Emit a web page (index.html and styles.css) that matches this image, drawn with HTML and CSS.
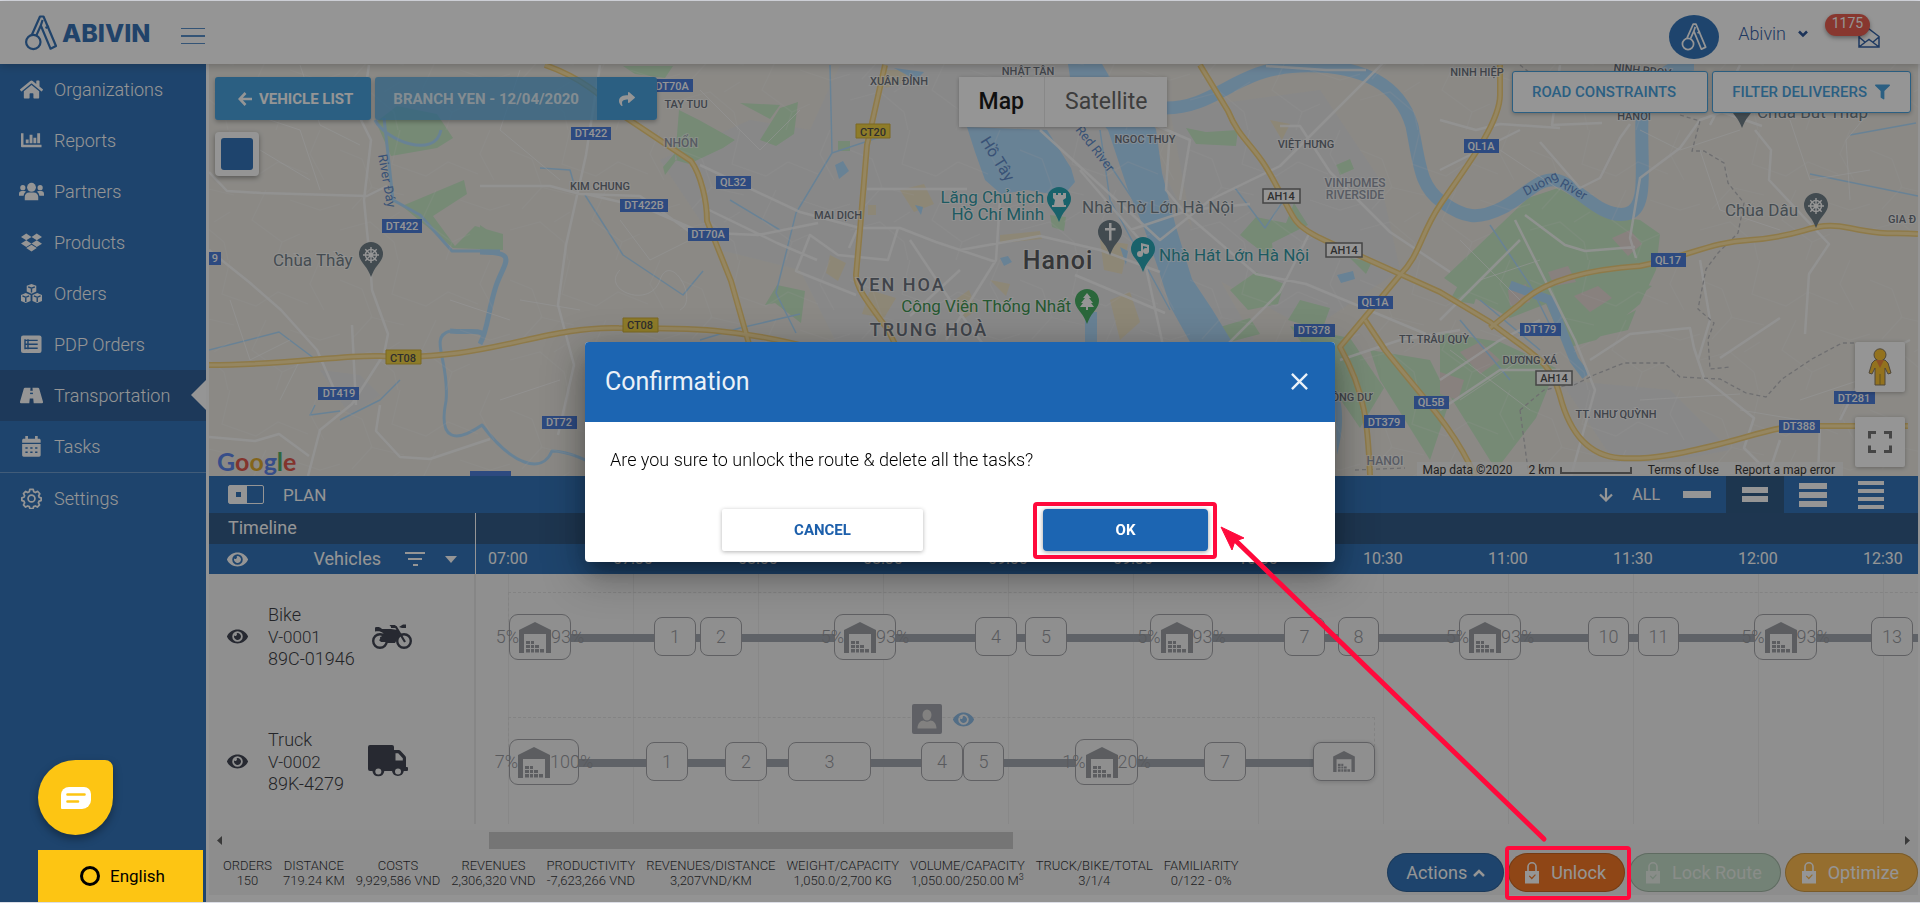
FILE: index.html
```html
<!DOCTYPE html>
<html lang="en">
<head>
<meta charset="utf-8">
<title>Abivin - Transportation</title>
<link rel="stylesheet" href="styles.css">
</head>
<body>
<svg class="sprite" aria-hidden="true">
  <symbol id="i-home" viewBox="0 0 576 512"><path d="M280.37 148.26L96 300.11V464a16 16 0 0 0 16 16l112.06-.29a16 16 0 0 0 15.92-16V368a16 16 0 0 1 16-16h64a16 16 0 0 1 16 16v95.64a16 16 0 0 0 16 16.05L464 480a16 16 0 0 0 16-16V300L295.67 148.26a12.19 12.19 0 0 0-15.3 0zM571.6 251.47L488 182.56V44.05a12 12 0 0 0-12-12h-56a12 12 0 0 0-12 12v72.61L318.47 43a48 48 0 0 0-61 0L4.34 251.47a12 12 0 0 0-1.6 16.9l25.5 31A12 12 0 0 0 45.15 301l235.22-193.74a12.19 12.19 0 0 1 15.3 0L530.9 301a12 12 0 0 0 16.9-1.6l25.5-31a12 12 0 0 0-1.7-16.93z"/></symbol>
  <symbol id="i-chart" viewBox="0 0 22 18"><path d="M0 1.5h2.6v12H21.5V16H1a1 1 0 0 1-1-1zM5 8h3v4H5zM9 3h3v9H9zM13 6h3v6h-3zM17 1.5h3V12h-3z"/></symbol>
  <symbol id="i-users" viewBox="0 0 26 20"><circle cx="13" cy="5.6" r="4.6"/><circle cx="4" cy="6" r="2.7"/><circle cx="22" cy="6" r="2.7"/><path d="M6 19v-3.200c0-3 2-4.800 4.500-4.800h5c2.500 0 4.500 1.800 4.500 4.800V19zM0 14.500v-2C0 10.600 1.200 9.600 3 9.600h2.400c.8 0 1.400.2 1.900.6C5.700 11.300 4.900 12.800 4.800 14.500zM26 14.500v-2c0-1.900-1.200-2.900-3-2.900h-2.400c-.8 0-1.400.2-1.900.6 1.600 1.100 2.400 2.600 2.500 4.300z"/></symbol>
  <symbol id="i-dropbox" viewBox="0 0 528 512"><path d="M264.4 116.3l-132 84.3 132 84.3-132 84.3L0 284.1l132.3-84.3L0 116.3 132.3 32l132.1 84.3zM131.6 395.7l132-84.3 132 84.3-132 84.3-132-84.3zm132.8-111.600l132-84.300-132-83.600L395.7 32 528 116.300l-132.300 84.300L528 284.800l-132.300 84.300-131.300-85z"/></symbol>
  <symbol id="i-cubes" viewBox="0 0 22 20"><path d="M11 0l5 2v6l-5 2.200L6 8V2zM5 9.500l5 2v6.300L5 20l-5-2.200v-6.300zM17 9.500l5 2v6.300L17 20l-5-2.200v-6.300z"/><path class="cut" d="M7.500 3l3.500 1.400L14.500 3M11 4.500V9M1.500 12.500L5 14l3.500-1.500M5 14v4.800M13.500 12.500L17 14l3.500-1.500M17 14v4.800"/></symbol>
  <symbol id="i-list" viewBox="0 0 22 19"><rect width="21.500" height="18.500" rx="2.200"/><path class="cut" d="M4.500 5.200h2M8 5.200h9.500M4.500 9.300h2M8 9.300h9.500M4.500 13.400h2M8 13.400h9.500M4.200 4v10.600M7.300 4v10.600"/></symbol>
  <symbol id="i-road" viewBox="0 0 24 16"><path d="M5.200 0H11l-.3 3h2.600L13 0h5.800c.6 0 1 .3 1.200.8L24 14.500c.2.800-.2 1.500-1 1.500h-8.700l-.5-5h-3.600l-.5 5H1c-.8 0-1.200-.7-1-1.500L4 .8C4.200.3 4.600 0 5.200 0z"/><path class="cut" d="M10.500 5.800h3"/></symbol>
  <symbol id="i-cal" viewBox="0 0 20 22"><path d="M3.500 0h2.800v3h7.400V0h2.800v3H18c1 0 1.600.7 1.600 1.600V7H.2V4.600C.2 3.700.8 3 1.800 3h1.700zM.2 8.300h19.400V20c0 1-.7 1.700-1.600 1.700H1.800C.9 21.700.2 21 .2 20z"/><path class="cut" stroke-width="2.400" d="M3.600 12.500h2.400M8.700 12.500h2.400M13.800 12.500h2.400M3.600 17h2.400M8.700 17h2.400M13.800 17h2.400"/></symbol>
  <symbol id="i-gear" viewBox="0 0 22 22"><path fill="none" stroke="currentColor" stroke-width="1.800" stroke-linejoin="round" d="M9.200 1.500h3.600l.6 2.500 1.700.8 2.300-1.300 2.300 2.500-1.200 2.100.6 1.700 2 .5v2.900l-2.200.6-.7 1.800 1.200 2.100-2.300 2.300-2.100-1.200-1.800.7-.6 2.200H9.400l-.7-2.200-1.700-.7L4.800 20l-2.200-2.300 1.200-2.100-.7-1.800-2.200-.6v-3l2.200-.5.7-1.700L2.600 5.900l2.300-2.300 2.100 1.200L8.700 4z"/><circle cx="11" cy="11" r="3.600" fill="none" stroke="currentColor" stroke-width="1.800"/></symbol>
  <symbol id="i-eye" viewBox="0 0 576 512"><path d="M572.52 241.4C518.29 135.59 410.93 64 288 64S57.68 135.64 3.48 241.41a32.35 32.35 0 0 0 0 29.19C57.71 376.41 165.07 448 288 448s230.32-71.64 284.52-177.41a32.35 32.35 0 0 0 0-29.19zM288 400a144 144 0 1 1 144-144 143.93 143.93 0 0 1-144 144zm0-240a95.31 95.31 0 0 0-25.31 3.79 47.85 47.85 0 0 1-66.9 66.9A95.78 95.78 0 1 0 288 160z"/></symbol>
  <symbol id="i-filter" viewBox="0 0 512 512"><path d="M487.976 0H24.028C2.710 0-8.047 25.866 7.058 40.971L192 225.941V432c0 7.831 3.821 15.170 10.237 19.662l80 55.980C298.020 518.690 320 507.493 320 487.980V225.941l184.947-184.970C520.021 25.896 509.338 0 487.976 0z"/></symbol>
  <symbol id="i-share" viewBox="0 0 512 512"><path d="M503.691 189.836L327.687 37.851C312.281 24.546 288 35.347 288 56.015v80.053C127.371 137.907 0 170.100 0 322.326c0 61.441 39.581 122.309 83.333 154.132 13.653 9.931 33.111-2.533 28.077-18.631C66.066 312.814 132.917 274.316 288 272.085V360c0 20.700 24.300 31.453 39.687 18.164l176.004-152c11.071-9.562 11.086-26.753 0-36.328z"/></symbol>
  <symbol id="i-left" viewBox="0 0 14 14"><path fill="none" stroke="currentColor" stroke-width="2.600" d="M7.500 1L1.800 7l5.700 6M2 7h12"/></symbol>
  <symbol id="i-down" viewBox="0 0 14 14"><path fill="none" stroke="currentColor" stroke-width="2.200" d="M1 6.500l6 6 6-6M7 0v12"/></symbol>
  <symbol id="i-mark" viewBox="0 0 32 36"><g fill="none" stroke="currentColor" stroke-width="2.200" stroke-linejoin="round"><circle cx="8.300" cy="27" r="7.200"/><path d="M7 19.500L15 1.500h3.500L31 31l-5.500 2.700L15.800 10.500l-4.300 9.600M15.800 10.500l1.800-5.500M20.500 13l3.500-1.800"/></g></symbol>
  <symbol id="i-bike" viewBox="0 0 40 26"><g fill="none" stroke="currentColor"><circle cx="8" cy="17" r="6.800" stroke-width="2.400"/><circle cx="32" cy="17" r="6.800" stroke-width="2.400"/><path stroke-width="2.200" d="M33 18L24 3h-5M8 17l5-7"/></g><path d="M3 3.500c3-1 5-.5 7 1.500h9l7 1 2 4-5 9h-8l-1.500-5L11 9C9 7.500 7 7 3 7.500zM27 3l4-2.500h3V4h-4zM17.500 1h6v2.500h-4z"/><path d="M8 13l6-2 2 7H9z"/></symbol>
  <symbol id="i-truck" viewBox="0 0 40 33"><path d="M2 0h22a2 2 0 0 1 2 2v3h4.500a3 3 0 0 1 2.200.9l4.600 5.200c.5.600.7 1.300.7 2v9h1a1 1 0 0 1 1 1v2a1 1 0 0 1-1 1h-3.200a6 6 0 0 1-11.800 0H16.300a6 6 0 0 1-11.900 0H2a2 2 0 0 1-2-2V2a2 2 0 0 1 2-2z"/><path class="hole" d="M27.500 8.200h2.700l4.600 5v2.300h-7.300z"/><circle class="hole" cx="10.300" cy="26.500" r="3"/><circle class="hole" cx="30" cy="26.500" r="3"/></symbol>
  <symbol id="i-wh" viewBox="0 0 32 31"><path d="M0 8L16 0l16 8v23h-5V12H5v19H0z"/><path d="M7 19h4v3H7zM12 19h3v3h-3zM7 23h4v3H7zM12 23h3v3h-3zM16 23h4v3h-4zM7 27h4v3.500H7zM12 27h3v3.500h-3zM16 27h4v3.500h-4zM21 27h4v3.500h-4z"/></symbol>
  <symbol id="i-lock" viewBox="0 0 14 22"><path fill="none" stroke="currentColor" stroke-width="1.600" d="M3 9V4.800a4 4 0 0 1 8 0V9"/><path fill-rule="evenodd" d="M0 9h14v12.500H0zM3.800 14.200l3 3.200 4-4.400-.8-.8-3.200 3.400-2.200-2.200z"/></symbol>
  <symbol id="i-pin" viewBox="0 0 24 35"><path d="M12 0a12 12 0 0 1 12 12c0 7-7 11-10.500 19.500L12 35l-1.500-3.500C7 23 0 19 0 12A12 12 0 0 1 12 0z"/></symbol>
  <symbol id="i-wheel" viewBox="0 0 18 18"><g fill="none" stroke="#fff" stroke-width="1.400"><circle cx="9" cy="9" r="5.500"/><circle cx="9" cy="9" r="1.500"/><path d="M9 1v16M1 9h16M3.300 3.300l11.400 11.400M14.700 3.300L3.300 14.700"/></g></symbol>
</svg>

<div class="app">
  <header class="topbar">
    <a class="brand" href="#"><svg class="brand-mark"><use href="#i-mark"/></svg><span>ABIVIN</span></a>
    <button class="burger" type="button" aria-label="Toggle menu"><i></i><i></i><i></i></button>
    <div class="account">
      <span class="avatar"><svg><use href="#i-mark"/></svg></span>
      <button class="user" type="button">Abivin <svg viewBox="0 0 10 8"><path d="M1 1.500l4 4 4-4"/></svg></button>
      <a class="mail" href="#" aria-label="Messages">
        <svg viewBox="0 0 22 20"><path d="M1 8.500L11 1l10 7.500V19H1zM1 9l6.500 5.500M21 9l-6.500 5.500M1 19l6.500-5 3.500-2.500 3.500 2.500 6.500 5"/></svg>
        <span class="count">1175</span>
      </a>
    </div>
  </header>

  <nav class="side">
    <a href="#"><svg class="w24"><use href="#i-home"/></svg>Organizations</a>
    <a href="#"><svg class="w22"><use href="#i-chart"/></svg>Reports</a>
    <a href="#"><svg class="w26"><use href="#i-users"/></svg>Partners</a>
    <a href="#"><svg class="w22"><use href="#i-dropbox"/></svg>Products</a>
    <a href="#"><svg class="w22"><use href="#i-cubes"/></svg>Orders</a>
    <a href="#"><svg class="w22"><use href="#i-list"/></svg>PDP Orders</a>
    <a href="#" class="active" aria-current="page"><svg class="w24"><use href="#i-road"/></svg>Transportation</a>
    <a href="#"><svg class="w22"><use href="#i-cal"/></svg>Tasks</a>
    <a href="#" class="last"><svg class="w22"><use href="#i-gear"/></svg>Settings</a>
  </nav>

  <main class="main">
    <section class="map" aria-label="Map">
      <svg class="map-art" viewBox="209 64 1709 412" preserveAspectRatio="xMidYMid slice">
        <defs>
          <pattern id="lanes" width="170" height="130" patternUnits="userSpaceOnUse"><path d="M0 20l22 9 10 28-20 22M60 0l-8 34 34 12 22-14 30 12M96 60l-14 30 30 22 18-8M0 100l30-8 24 20 4 18M120 70l30 10 20-6M150 0l-10 24 14 26M30 57l34 8M112 112l-6 18M44 92l16-10"/></pattern>
        </defs>
        <rect x="209" y="64" width="1709" height="412" fill="#ebe8e1"/>
        <g fill="#e7e7e7">
          <path d="M660 160l90-40 60 10 30-65h240l60 60 60 120 60 105H840l-40-80-80-20zM1170 110l150-20 60 90 20 90-90 60-110-60zM1560 380l110 10 60 60-110 20zM320 370l40 5 20 20-30 20z"/>
        </g>
        <g fill="#f3e2b5" opacity=".7">
          <path d="M900 190l24-6 10 20-20 8zM868 205h8v10h-8zM870 290l26 8-12 20-22-4zM1000 235l40-4 2 8-42 4zM1110 300l20-8 10 30-20 18zM830 255l16 8-8 18-12-8zM1100 240l28 4-6 30-18-4zM880 70h26v12l-20 6zM1270 120l20 4-8 16zM990 280l20 4-4 12zM955 300l14-10 8 20-12 8z"/>
        </g>
        <g fill="#c4eac2">
          <path d="M376 122l15 34 46-8 16-10-16-24-40-8zM402 206l62-26 3 14-34 22 22 30 20-20 28 8v16l-50-2zM675 160l4-50 20 10 36 20-12 8-34 16zM623 66h50l-8 12-30-4zM760 140l20-32 18-6-4 32-18 12zM740 103l40 2-10 14zM665 175l12-16-2-6-12 14zM480 225l18 12 2 14-20 2zM765 305l12-20 28 6-4 32-26-20zM838 141h12v10h-12zM1186 128l20 4 32-2-2 16-40-2zM1240 235l16-18 30 6 8-20 14 22-36 18 2 18zM1230 290l26-18 28 12-6 20-30 6zM1300 300l30 8-8 22-34-10zM1350 258l22 4-6 12zM1210 330l40-12 10 16-30 8zM1050 215l16 2-2 14-12-4zM1336 165l14-6 4 10-14 6zM1290 326l60 12 34 50-24 40zM1370 350l60 10 20 40-20 60-50-80z"/>
          <path d="M1478 246l50-48 30-10 44 26 38 6 20 14-4 36-16 34-44 36-30 8-20-44-36 14-46-26-20-14zM1440 332l60 10 56 26-20 50-40 52-56-90zM1570 345l66-35-8 20-44 10zM1560 304l60-24 32 6-76 60zM1450 300l20-36 14 10-10 30z"/>
        </g>
        <g fill="#e6d8d3"><path d="M1612 238l18-8 12 14-14 12zM1548 272l20-6 8 16-22 4zM1508 290l18-6 4 18-20 4zM1460 352l20-10 20 18-20 14zM1440 372l24 8-6 20-18-6zM1574 296l24-10 14 12-22 14z"/></g>
        <g fill="#aadaff">
          <path d="M967 127l80 3 24 38 4 14-12 14-36-6-26 4-16-14-10-28zM1068 64h34l10 17 20 16 24 32 6 44 14 54 16 52 20 30 20 33h-42l-20-36-12-38-14-40-16-38-20-60-36-40zM835 165l8-4 6 10-10 8zM915 205l8 2-2 8zM1085 312h12v30h-12zM1120 247l8 4-2 14zM1337 275l16-4 2 8-14 4zM1335 395c8 0 10 30 2 60zM1000 258l8-2 4 6-8 4zM894 68l30 4-8 8z"/>
        </g>
        <g fill="none" stroke="#aadaff" stroke-linejoin="round">
          <path stroke-width="13" d="M1166 108c50 0 70-40 134-42s100 20 112 60c8 40 8 60 30 76s36 18 60 6 40-36 60-26 40 36 64 32 14-50 16-96 40-54 52-54"/>
          <path stroke-width="9" d="M1510 285l40 15 24 60 12 16"/>
          <path stroke-width="5" d="M480 252c40 0 24 10 16 34s-8 44-16 58M450 331c20 2 28-2 34 4"/>
          <path stroke-width="3" d="M450 331c-22 6 0 30-4 70-8 40 10 42 36 24 30 40 60 50 70 26 16 0 40 10 70 30M384 118l9 82 27 15 32 36h48M375 120c10 20 60 40 66 10"/>
          <path stroke-width="1.500" d="M585 195l38 60 60 40 20-24M830 65l2 88-36 60-20 80 20 40M1110 165l40 60 26 10M1380 345l60 70M400 380l-20 20-40 20M315 405l-5 10 30-4M540 168l30 2 4 14M832 153l54-18M1850 135l66-12M1810 174l108 22M1490 225l40 60 20 40M1460 320l50 60M1480 300l60 50M1235 188l30 40 20-30M1100 130l10 70 60 110M209 350l70-18 40 30M700 340l40-12 60-14M730 200l50 30"/>
        </g>
        <rect x="209" y="64" width="1709" height="412" fill="url(#lanes)" fill-opacity=".4" class="lanes"/>
        <g class="minor">
          <path d="M369 65l-8 55 10 20-7 60 6 62 2 28 16 44-4 20-32 50-32 26-12 46M209 172l18 19 34 2 106 3 20-10M209 250l40 32 32 28 36 40 20 46M352 325l4 80M209 437l46 4 24-7 30 22M380 405l-4 26 24 26 30 2 60-20M600 65l-14 90-20 90-8 60 16 60-16 70M480 186h70l30 8 60 2 50 36 68 3 60-12M586 194l60 14 50 22M700 165l100 47 60 16 40 0 36 14 60 20M867 189h100M1010 380l-60-80-40-60M898 228l-10 32-50-5-28-20-14 36 60 24M960 270l-50 46M707 209l70 34 40 17M857 230l-8 18M960 250l80-14 60 14 60 22M1000 200l-4 60-50 80M1080 170l60 70 24 110M1075 275l90 38M1040 130l120 110 50-40 70-34 50-50 60-60 18-14M1170 130l-4 60 20 24 70 60 50 10 120 50M1120 110l70 30-10 60M1130 230l60-20 60-6M1366 70l-40 0-60-4M1280 126l20 0 30 46 60 60 60 40M1310 232l-30 60-60 60M1440 320l60-60 20-20M1440 120l36 10 24-6M1500 124l60 4M1440 170l20-10 60-30M1560 65l-8 60 50-2M1540 142l40 46 20-10 20-40 10-14M1525 215l40 30 20 6 50-4M1515 220l60 120 20 50-24 86M1636 258l-6-20 10-60 40-30 20-28 22-8 40 14M1755 130l16 20-2 30 60 64-20 30-4 60M1590 360l40-26 60-6 4 20 10 30 50 40-10 30 20 20M1440 380l60-40 40-20M1700 260l10 60-12 40M1720 358l60-40M1820 426l-2 50M1840 420l30-60 40-20M1780 440l-12 36M1740 65l-30 60M1440 410l60-40 60 0M1340 360l60-20 60-10"/>
        </g>
        <g class="hair"><path d="M240 110l60 20 20 60M300 65l20 60 40 20M260 150l50 30M520 70l-20 60 60 50M700 90l60 60 40-40M620 220l30 40 40-20M620 270c-20 20 30 40 40 10s40 20 20 30M1500 150l60 40M1790 120l20 60 60-10M1850 200l-4-60 50-60M1700 150l20 60 60 20M1640 130l40 20 60-20M1460 240l60 60M1480 280l60-20M1450 350l80 60M1460 400l60-40M230 300l20 60 40-20M280 400l20-40M450 300l60 20M500 400l60-20M520 300l60 10M1800 400l60-20M1640 400l100-6M1740 410l60 10"/></g>
        <g class="dash"><path d="M1520 65l10 8M1680 115l20 6-8 30 12 0 20 12 4 20 16 20-6 30-20 20-12 16-8 40 16 14-6 16 2 30 20-2M1574 385l20-10 30-12 40 0 16 14 40 2 26 14 20 4 16-18 30-20 30-16h60M1520 410l24-20 30-6M1520 410l8 60M1355 470l50-2"/></g>
        <g class="hwy">
          <path d="M209 365c80 0 130-10 170-9 110 6 160-30 240-28 70 0 120 0 200 22M545 65c40 14 60 34 80 52l66 44c10 14 16 40 16 60l24 60 20 70M885 65l-18 80-7 85-4 45c0 14 14 30 32 55l20 40M1200 65l28 46c10 24 20 30 34 50s26 50 34 60 20 16 64 35l80 36 50 30c40 32 60 36 70 74s30 60 60 62 60-4 100-14 60-20 100-18h88M1500 65v30c0 30-40 80-60 110s-20 50-40 70l-60 72c26 46 28 80 30 128M1365 320l20 30c40 50 70 80 90 126M1490 328l30-24c20-20 60-34 120-38 50-10 70-24 110-26 60-4 60-20 100-12s40 4 68 6"/>
          <path class="core" d="M209 365c80 0 130-10 170-9 110 6 160-30 240-28 70 0 120 0 200 22M545 65c40 14 60 34 80 52l66 44c10 14 16 40 16 60l24 60 20 70M885 65l-18 80-7 85-4 45c0 14 14 30 32 55l20 40M1200 65l28 46c10 24 20 30 34 50s26 50 34 60 20 16 64 35l80 36 50 30c40 32 60 36 70 74s30 60 60 62 60-4 100-14 60-20 100-18h88M1500 65v30c0 30-40 80-60 110s-20 50-40 70l-60 72c26 46 28 80 30 128M1365 320l20 30c40 50 70 80 90 126M1490 328l30-24c20-20 60-34 120-38 50-10 70-24 110-26 60-4 60-20 100-12s40 4 68 6"/>
        </g>
        <g class="shields">
          <g class="blue">
            <path d="M382 219h40v14h-40zM209 252h12v13h-12zM318 387h41v13h-41zM542 416h35v13h-35zM571 127h40v13h-40zM650 79h43v13h-43zM620 199h48v13h-48zM688 228h41v13h-41zM716 176h35v13h-35zM1294 324h41v13h-41zM1358 296h35v13h-35zM1464 139h35v14h-35zM1651 253h35v14h-35zM1520 323h41v13h-41zM1834 391h41v13h-41zM1779 420h41v13h-41zM1364 415h41v13h-41zM1414 396h35v13h-35zM470 471h41v10h-41z"/>
          </g>
          <g class="gold"><path d="M386 350h35v14h-35zM623 318h35v14h-35zM856 124h34v14h-34z"/></g>
          <g class="plain"><path d="M1263 189h37v14h-37zM1326 243h36v14h-36zM1536 371h36v14h-36z"/></g>
        </g>
        <g class="tag light">
          <text x="402" y="230">DT422</text><text x="215" y="262">9</text><text x="339" y="397">DT419</text><text x="559" y="426">DT72</text><text x="591" y="137">DT422</text><text x="672" y="90">DT70A</text><text x="644" y="209">DT422B</text><text x="708" y="238">DT70A</text><text x="733" y="186">QL32</text><text x="1314" y="334">DT378</text><text x="1375" y="306">QL1A</text><text x="1481" y="150">QL1A</text><text x="1668" y="264">QL17</text><text x="1540" y="333">DT179</text><text x="1854" y="402">DT281</text><text x="1799" y="430">DT388</text><text x="1384" y="426">DT379</text><text x="1431" y="406">QL5B</text>
        </g>
        <g class="tag dark"><text x="403" y="362">CT08</text><text x="640" y="329">CT08</text><text x="873" y="136">CT20</text><text x="1281" y="200">AH14</text><text x="1344" y="254">AH14</text><text x="1554" y="382">AH14</text></g>
        <g class="town">
          <text x="899" y="85">XUÂN ĐỈNH</text><text x="686" y="108">TAY TUU</text><text x="681" y="147" class="soft">NHỔN</text><text x="600" y="190">KIM CHUNG</text><text x="838" y="219">MAI DỊCH</text><text x="1028" y="75">NHẬT TÂN</text><text x="1145" y="143">NGOC THUY</text><text x="1306" y="148">VIỆT HƯNG</text><text x="1355" y="187" class="soft">VINHOMES</text><text x="1355" y="199" class="soft">RIVERSIDE</text><text x="1477" y="76">NINH HIỆP</text><text x="1642" y="74" transform="rotate(6 1642 74)">NINH PROV</text><text x="1634" y="120">HANOI</text><text x="1902" y="223">GIA Đ</text><text x="1434" y="343">TT. TRÂU QUỲ</text><text x="1530" y="364">DƯƠNG XÁ</text><text x="1616" y="418">TT. NHƯ QUỲNH</text><text x="1348" y="401">ĐÔNG DƯ</text><text x="1385" y="465" class="soft">HANOI</text>
        </g>
        <g class="district"><text x="901" y="291">YEN HOA</text><text x="929" y="336">TRUNG HOÀ</text></g>
        <text class="capital" x="1058" y="269">Hanoi</text>
        <g class="water-name"><text x="378" y="155" transform="rotate(80 378 155)">River Đáy</text><text x="980" y="141" transform="rotate(58 980 141)" class="lake">Hồ Tây</text><text x="1075" y="130" transform="rotate(52 1075 130)">Red River</text><text x="1526" y="196" transform="rotate(-28 1526 196)">Duong</text><text x="1559" y="186" transform="rotate(30 1559 186)">River</text></g>
        <g class="poi">
          <text class="teal" x="1044" y="203" text-anchor="end">Lăng Chủ tịch</text><text class="teal" x="1044" y="220" text-anchor="end">Hồ Chí Minh</text>
          <text class="slate" x="1082" y="213">Nhà Thờ Lớn Hà Nội</text><text class="teal" x="1159" y="261">Nhà Hát Lớn Hà Nội</text><text class="green" x="1071" y="312" text-anchor="end">Công Viên Thống Nhất</text>
          <text class="slate" x="273" y="266">Chùa Thầy</text><text class="slate" x="1725" y="216">Chùa Dâu</text><text class="slate" x="1757" y="118">Chùa Bút Tháp</text>
        </g>
        <g>
          <use href="#i-pin" x="1047" y="187" width="24" height="35" fill="#129eaf"/><path fill="#fff" d="M1053 193h3v2h2v-2h3v2h2v-2h3v5l-3 2 1 5h2v2h-14v-2h2l1-5-2-2z"/>
          <use href="#i-pin" x="1098" y="220" width="24" height="35" fill="#60717b"/><path fill="#fff" d="M1109 223h2.500v5h4v2.500h-4v10H1109v-10h-4V228h4z"/>
          <use href="#i-pin" x="1131" y="237" width="24" height="35" fill="#129eaf"/><g fill="#fff"><circle cx="1140" cy="254" r="3"/><circle cx="1146" cy="251" r="3"/><path d="M1141 243l8 2v7h-2v-5l-4-1v8h-2z"/></g>
          <use href="#i-pin" x="1075" y="289" width="24" height="35" fill="#34a853"/><path fill="#fff" d="M1087 293l4 5h-2l4 5h-2l3 4h-6v3h-2v-3h-6l3-4h-2l4-5h-2z"/>
          <use href="#i-pin" x="359" y="242" width="24" height="35" fill="#60717b"/><use href="#i-wheel" x="362" y="246" width="18" height="18"/>
          <use href="#i-pin" x="1804" y="193" width="24" height="35" fill="#60717b"/><use href="#i-wheel" x="1807" y="197" width="18" height="18"/>
          <use href="#i-pin" x="1730" y="93" width="24" height="35" fill="#60717b"/>
        </g>
      </svg>

      <div class="map-ui">
        <div class="map-left">
          <div class="map-actions">
            <button class="btn-sky" type="button"><svg class="ic14"><use href="#i-left"/></svg>VEHICLE LIST</button>
            <div class="joined"><button class="btn-branch" type="button" disabled>BRANCH YEN - 12/04/2020</button><button class="btn-share" type="button" aria-label="Share"><svg><use href="#i-share"/></svg></button></div>
          </div>
          <button class="swatch" type="button" aria-label="Layer colour"><i></i></button>
        </div>
        <div class="map-type"><button type="button" class="on">Map</button><button type="button">Satellite</button></div>
        <div class="map-right">
          <button class="btn-line road" type="button">ROAD CONSTRAINTS</button>
          <button class="btn-line" type="button">FILTER DELIVERERS <svg><use href="#i-filter"/></svg></button>
        </div>
      </div>
      <div class="map-tools">
        <button type="button" aria-label="Street view"><svg width="24" height="38" viewBox="0 0 24 38"><g fill="#fbbc1b" stroke="#7a6a50" stroke-width="1"><path d="M7 12h10l3 3 3 10-3 1-3-6v17H7V20l-3 6-3-1 3-10z"/><circle cx="12" cy="6.800" r="6"/></g><path d="M8 12h8l-4 8z" fill="#f07c2a"/><path d="M12 26v11" stroke="#9a7a20"/></svg></button>
        <button type="button" aria-label="Full screen"><svg width="24" height="22" viewBox="0 0 24 22"><path fill="none" stroke="#666" stroke-width="3" d="M1.500 7.500v-6H8M16 1.500h6.500v6M22.500 14.500v6H16M8 20.500H1.500v-6"/></svg></button>
      </div>
      <a class="google" href="#" aria-label="Google"><span class="gb">G</span><span class="gr">o</span><span class="gy">o</span><span class="gb">g</span><span class="gg">l</span><span class="gr">e</span></a>
      <div class="credits"><span>Map data ©2020</span><span class="scale">2 km <i></i></span><a href="#">Terms of Use</a><a href="#">Report a map error</a></div>
    </section>

    <section class="plan">
      <div class="plan-bar">
        <button class="toggle" type="button" aria-label="Panel mode"><i></i></button>
        <span class="plan-name">PLAN</span>
        <button class="all" type="button"><svg class="ic14"><use href="#i-down"/></svg>ALL</button>
        <div class="density">
          <button type="button" class="d1" aria-label="One row"><i></i></button>
          <button type="button" class="d2 on" aria-label="Two rows"><i></i><i></i></button>
          <button type="button" class="d3" aria-label="Three rows"><i></i><i></i><i></i></button>
          <button type="button" class="d4" aria-label="Four rows"><i></i><i></i><i></i><i></i></button>
        </div>
      </div>
      <div class="line-head"><span>Timeline</span></div>
      <div class="time-head">
        <div class="veh-head"><svg class="eye"><use href="#i-eye"/></svg><span>Vehicles</span>
          <svg class="sort" viewBox="0 0 20 14"><path d="M0 1h20M3 7h14M8 13h5"/></svg><svg class="caret" viewBox="0 0 12 7"><path d="M0 0h12L6 7z"/></svg></div>
        <div class="hours"><span>07:00</span><span>07:30</span><span>08:00</span><span>08:30</span><span>09:00</span><span>09:30</span><span>10:00</span><span>10:30</span><span>11:00</span><span>11:30</span><span>12:00</span><span>12:30</span></div>
      </div>

      <div class="rows">
        <div class="row">
          <div class="vehicle"><svg class="eye"><use href="#i-eye"/></svg><p>Bike<br><small>V-0001</small><br>89C-01946</p><svg class="kind bike"><use href="#i-bike"/></svg></div>
          <div class="lane">
            <span class="span" style="left:32px;width:1500px"></span><span class="bar" style="left:94px;width:1360px"></span>
            <div class="depot" style="left:33px;width:62px">5%<svg><use href="#i-wh"/></svg>93%</div>
            <div class="stop" style="left:178px;width:42px">1</div><div class="stop" style="left:224px;width:42px">2</div>
            <div class="depot" style="left:358px;width:62px">5%<svg><use href="#i-wh"/></svg>93%</div>
            <div class="stop" style="left:499px;width:42px">4</div><div class="stop" style="left:549px;width:42px">5</div>
            <div class="depot" style="left:674px;width:63px">5%<svg><use href="#i-wh"/></svg>93%</div>
            <div class="stop" style="left:808px;width:41px">7</div><div class="stop" style="left:862px;width:41px">8</div>
            <div class="depot" style="left:983px;width:62px">5%<svg><use href="#i-wh"/></svg>93%</div>
            <div class="stop" style="left:1112px;width:41px">10</div><div class="stop" style="left:1162px;width:41px">11</div>
            <div class="depot" style="left:1278px;width:63px">5%<svg><use href="#i-wh"/></svg>93%</div>
            <div class="stop" style="left:1395px;width:42px">13</div>
          </div>
        </div>
        <div class="row">
          <div class="vehicle"><svg class="eye"><use href="#i-eye"/></svg><p>Truck<br><small>V-0002</small><br>89K-4279</p><svg class="kind truck"><use href="#i-truck"/></svg></div>
          <div class="lane">
            <span class="span" style="left:32px;width:867px"></span><span class="bar" style="left:100px;width:740px"></span>
            <div class="driver" style="left:436px"><span><svg viewBox="0 0 30 30"><ellipse cx="15" cy="11" rx="4.500" ry="5.500"/><path d="M5.500 24.500c0-5 3-8 6-8 2 1.500 5 1.500 7 0 3 0 6 3 6 8z"/></svg></span><svg class="eye"><use href="#i-eye"/></svg></div>
            <div class="depot" style="left:33px;width:70px">7%<svg><use href="#i-wh"/></svg>100%</div>
            <div class="stop" style="left:170px;width:42px">1</div><div class="stop" style="left:249px;width:42px">2</div><div class="stop" style="left:312px;width:83px">3</div>
            <div class="stop" style="left:445px;width:42px">4</div><div class="stop" style="left:487px;width:41px">5</div>
            <div class="depot" style="left:599px;width:63px">1%<svg><use href="#i-wh"/></svg>20%</div>
            <div class="stop" style="left:728px;width:42px">7</div>
            <div class="stop end" style="left:837px;width:62px"><svg><use href="#i-wh"/></svg></div>
          </div>
        </div>
      </div>

      <div class="scroll"><svg viewBox="0 0 5 9"><path d="M5 0v9L0 4.500z"/></svg><div class="track"><i></i></div><svg viewBox="0 0 5 9"><path d="M0 0v9l5-4.500z"/></svg></div>

      <footer class="foot">
        <dl class="stats">
          <div><dt>ORDERS</dt><dd>150</dd></div><div><dt>DISTANCE</dt><dd>719.24 KM</dd></div><div><dt>COSTS</dt><dd>9,929,586 VND</dd></div><div><dt>REVENUES</dt><dd>2,306,320 VND</dd></div><div><dt>PRODUCTIVITY</dt><dd>-7,623,266 VND</dd></div><div><dt>REVENUES/DISTANCE</dt><dd>3,207VND/KM</dd></div><div><dt>WEIGHT/CAPACITY</dt><dd>1,050.0/2,700 KG</dd></div><div><dt>VOLUME/CAPACITY</dt><dd>1,050.00/250.00 M<sup>3</sup></dd></div><div><dt>TRUCK/BIKE/TOTAL</dt><dd>3/1/4</dd></div><div><dt>FAMILIARITY</dt><dd>0/122 - 0%</dd></div>
        </dl>
        <div class="cmds">
          <button class="pill blue" type="button">Actions <svg class="up" viewBox="0 0 12 8"><path d="M1 7l5-5 5 5"/></svg></button>
          <div class="marked"><button class="pill orange" type="button"><svg class="lock"><use href="#i-lock"/></svg>Unlock</button></div>
          <button class="pill mint" type="button" disabled><svg class="lock"><use href="#i-lock"/></svg>Lock Route</button>
          <button class="pill amber" type="button"><svg class="lock"><use href="#i-lock"/></svg>Optimize</button>
        </div>
      </footer>
    </section>
  </main>
</div>

<div class="backdrop">
  <div class="dialog" role="dialog" aria-modal="true" aria-labelledby="dlg-title">
    <div class="dialog-head"><h2 id="dlg-title">Confirmation</h2><button type="button" aria-label="Close"><svg viewBox="0 0 18 18"><path d="M1 1l16 16M17 1L1 17"/></svg></button></div>
    <p>Are you sure to unlock the route &amp; delete all the tasks?</p>
    <div class="dialog-cmds"><button class="cancel" type="button">CANCEL</button><div class="marked ok-mark"><button class="ok" type="button">OK</button></div></div>
  </div>
</div>

<div class="floaters">
  <button class="chat" type="button" aria-label="Chat"><svg viewBox="0 0 30 22"><path d="M8 0h15a7 7 0 0 1 7 7v6a9 9 0 0 1-9 9H1a1 1 0 0 1-1-1V8a8 8 0 0 1 8-8z" fill="#fff"/><path d="M6.500 7.500h17M6.500 14.500h10.500" stroke="#fdc513" stroke-width="2.600" stroke-linecap="round"/></svg></button>
  <button class="lang" type="button"><i></i>English</button>
</div>
<svg class="arrow" viewBox="0 0 1920 903" preserveAspectRatio="none" aria-hidden="true"><path d="M1233 538L1544 839" stroke="#ff0a3c" stroke-width="5" stroke-linecap="round"/><path d="M1221 527l23 11-9 3-3 9z" fill="#ff0a3c" stroke="#ff0a3c" stroke-width="1"/></svg>
</body>
</html>
```
FILE: styles.css
```css
* { box-sizing: border-box; }
body {
  margin: 0;
  height: 100vh;
  padding: 1px 0;
  overflow: hidden;
  background: #dcdee6;
  color: #2f3437;
  font: 400 18px/22px Roboto, "Liberation Sans", sans-serif;
}
button { margin: 0; padding: 0; border: 0; background: none; color: inherit; font: inherit; cursor: pointer; }
a { color: inherit; text-decoration: none; }
svg { fill: currentColor; flex: none; display: block; }
.sprite { position: absolute; width: 0; height: 0; }
.cut { fill: none; stroke: #1c65b2; stroke-width: 1.5; }
.hole { fill: #f4f4f4; }
.ic14 { width: 14px; height: 14px; }

.app {
  height: 100%;
  display: grid;
  grid-template: 63px minmax(0, 1fr) / 206px minmax(0, 1fr);
  background: #fbfbfb;
}

/* Top bar */
.topbar {
  grid-column: 1 / -1;
  position: relative;
  display: flex;
  align-items: center;
  padding: 0 40px 0 25px;
  background: #fff;
  box-shadow: 0 2px 8px rgba(0, 0, 0, .25);
  z-index: 2;
}
.brand { display: flex; align-items: center; gap: 5px; color: #1f62ad; font: 800 25px/30px Inter, sans-serif; }
.brand-mark { width: 32px; height: 36px; }
.burger { width: 24px; height: 16px; margin-left: 30px; margin-top: 6px; display: flex; flex-direction: column; justify-content: space-between; }
.burger i { height: 1px; background: #4682c3; }
.burger i:nth-child(2) { height: 2px; }
.account { margin-left: auto; display: flex; align-items: center; }
.avatar { width: 50px; height: 44px; margin-top: 9px; border-radius: 50%; background: #1c65b2; color: #fff; display: grid; place-items: center; }
.avatar svg { width: 28px; height: 28px; }
.user { display: flex; align-items: center; gap: 12px; margin: 2px 50px 0 19px; color: #1b4f9c; font-weight: 300; }
.user svg { width: 10px; height: 8px; fill: none; stroke: #17448c; stroke-width: 2.5; }
.mail { position: relative; width: 22px; height: 20px; margin-top: 10px; color: #1b4f9c; }
.mail svg { width: 22px; height: 20px; fill: none; stroke: currentColor; stroke-width: 1.5; }
.count {
  position: absolute; right: 10px; top: -14px;
  width: 45px; height: 22px; border-radius: 11px;
  background: #e74c3c; color: #fff; text-align: center;
  font-size: 14px; line-height: 19px; box-shadow: 0 2px 4px rgba(0, 0, 0, .4);
}

/* Side navigation */
.side { background: #1c65b2; color: #fff; font-weight: 300; }
.side a { position: relative; height: 51px; display: grid; grid-template-columns: 26px 1fr; align-items: center; gap: 10px; padding-left: 18px; }
.side svg { height: 21px; justify-self: center; }
.w22 { width: 21px; }
.w24 { width: 23px; }
.w26 { width: 25px; }
.side .active { background: #194f8e; }
.side .active::after {
  content: ""; position: absolute; right: 0; top: 10px;
  border: 15px solid transparent; border-left: 0; border-right-color: #fff;
}
.side .active .cut { stroke: #194f8e; }
.side .last { border-top: 1px solid #5f93ca; height: 52px; }

/* Map */
.main { min-width: 0; padding: 0 2px 7px 3px; display: flex; flex-direction: column; }
.map { position: relative; flex: 1 1 0; min-height: 0; overflow: hidden; }
.map-art { position: absolute; inset: 0; width: 100%; height: 100%; }
.lanes { opacity: .5; }
#lanes path { fill: none; stroke: #fff; stroke-width: 1.2; }
.minor { fill: none; stroke: #fbfbfb; stroke-width: 2.5; stroke-linejoin: round; opacity: .85; }
.hair { fill: none; stroke: #fff; stroke-width: 1; opacity: .6; }
.dash { fill: none; stroke: #b5b5b8; stroke-width: 1.3; stroke-dasharray: 4 3; }
.hwy { fill: none; stroke: #f1cb6e; stroke-width: 6; stroke-linejoin: round; }
.hwy .core { stroke: #ffe39b; stroke-width: 3; }
.shields .blue { fill: #386fd7; }
.gold { fill: #f2cf31; stroke: #cda924; }
.plain { fill: #fff; stroke: #666; stroke-width: 1.5; }
.tag { font-size: 11px; font-weight: 500; text-anchor: middle; }
.light { fill: #fff; }
.dark { fill: #3a3a3a; }
.town { font-size: 11px; font-weight: 500; text-anchor: middle; fill: #5c6470; }
.town .soft { fill: #8a90a0; font-size: 12px; }
.town, .district, .capital, .poi { stroke: #fff; stroke-opacity: .6; stroke-width: 2px; paint-order: stroke; }
.district { font-size: 18px; font-weight: 500; text-anchor: middle; fill: #5c6470; letter-spacing: 2px; }
.capital { font-size: 25px; font-weight: 500; text-anchor: middle; fill: #47494d; letter-spacing: 1px; }
.water-name { font-size: 13px; fill: #4f7fc4; }
.water-name .lake { font-size: 16px; }
.poi { font-size: 17px; }
.teal { fill: #188e9c; }
.slate { fill: #66747d; }
.green { fill: #2b8a3e; }

.map-ui { position: relative; display: grid; grid-template-columns: minmax(0, 1fr) auto minmax(0, 1fr); align-items: start; padding: 7px 7px 0 6px; font-size: 15px; font-weight: 700; }
.map-left { padding-top: 6px; display: grid; gap: 12px; justify-items: start; }
.map-actions { display: flex; gap: 4px; color: #fff; }
.btn-sky { height: 43px; padding: 0 18px 0 23px; display: flex; align-items: center; gap: 7px; border-radius: 3px; background: #3498db; box-shadow: 0 2px 4px rgba(0, 0, 0, .3); }
.joined { display: flex; border-radius: 3px; overflow: hidden; box-shadow: 0 2px 4px rgba(0, 0, 0, .3); }
.btn-branch { height: 43px; padding: 0 18px; background: rgba(52, 152, 219, .72); color: rgba(255, 255, 255, .8); }
.btn-share { width: 60px; display: grid; place-items: center; background: #3498db; }
.btn-share svg { width: 16px; height: 16px; }
.swatch { width: 44px; height: 44px; padding: 6px; border-radius: 4px; background: #fff; box-shadow: 0 2px 5px rgba(0, 0, 0, .4); }
.swatch i { display: block; height: 32px; border-radius: 3px; background: #1c65b2; }
.map-type { margin-top: 6px; display: flex; font-size: 23px; font-weight: 400; background: #fff; box-shadow: 0 1px 4px rgba(0, 0, 0, .3); }
.map-type button { height: 50px; padding: 0 20px; color: #565656; }
.map-type .on { color: #000; font-weight: 500; border-right: 1px solid #e6e6e6; }
.map-right { display: flex; justify-content: flex-end; gap: 4px; color: #3498db; font-weight: 500; }
.btn-line { height: 42px; padding: 0 20px 0 19px; display: flex; align-items: center; gap: 8px; border: 1px solid #3498db; border-radius: 3px; background: #fff; box-shadow: 0 1px 4px rgba(0, 0, 0, .3); }
.btn-line.road { padding-right: 31px; }
.btn-line svg { width: 15px; height: 16px; }
.map-tools { position: absolute; right: 13px; bottom: 9px; display: grid; gap: 25px; }
.map-tools button { width: 50px; height: 50px; border-radius: 2px; background: #fff; display: grid; place-items: center; box-shadow: 0 1px 4px rgba(0, 0, 0, .3); }
.google { position: absolute; left: 8px; bottom: 0; font: 700 25px/30px Lato, sans-serif; }
.gb { color: #4c78e8; } .gr { color: #dc4538; } .gy { color: #dda416; } .gg { color: #3aa757; }
.credits { position: absolute; right: 75px; bottom: -2px; height: 16px; padding: 0 8px 0 6px; display: flex; gap: 16px; background: rgba(245, 245, 245, .7); color: #222; font-size: 12px; line-height: 16px; }
.scale { display: flex; gap: 5px; }
.scale i { width: 72px; height: 7px; margin-top: 5px; border: 2px solid #666; border-top: 0; }

/* Plan header */
.plan { flex: none; color: #2f3437; background: #f4f4f4; }
.plan-bar { height: 37px; padding: 0 18px 0 19px; display: flex; align-items: center; background: #1c65b2; color: #fff; font-size: 17px; }
.toggle { width: 36px; height: 19px; border: 1px solid #fff; border-radius: 2px; }
.toggle i { display: block; width: 18px; height: 17px; background: linear-gradient(#1c65b2, #1c65b2) 7px 6px / 5px 5px no-repeat #fff; }
.plan-name { margin-left: 19px; }
.all { margin-left: auto; margin-right: 8px; display: flex; align-items: center; gap: 19px; font-size: 16px; }
.density { align-self: stretch; display: flex; }
.density button { width: 58px; display: flex; flex-direction: column; align-items: center; justify-content: center; gap: 3px; }
.density i { width: 28px; height: 6px; background: #fff; }
.density .d1 i { height: 7px; }
.density .on { background: #1a4a7a; }
.density .d2 i { width: 26px; }
.density .d4 { gap: 4px; }
.density .d4 i { width: 26px; height: 4px; }
.line-head { height: 31px; background: #1b497b; color: #fff; display: flex; }
.line-head span { width: 267px; padding: 4px 19px; border-right: 1px solid #fff; }
.time-head { height: 30px; display: flex; background: #1c65b2; color: #fff; overflow: hidden; }
.veh-head { flex: none; width: 267px; padding: 0 18px; display: flex; align-items: center; border-right: 1px solid #fff; }
.eye { width: 21px; height: 19px; }
.veh-head span { margin: 0 24px 0 auto; }
.sort { width: 20px; height: 14px; fill: none; stroke: #fff; stroke-width: 2; }
.caret { width: 12px; height: 7px; margin-left: 20px; }
.hours { display: flex; align-items: center; font-size: 16px; padding-left: 12px; }
.hours span { flex: none; width: 125px; }

/* Vehicle rows */
.rows { height: 256px; }
.row { height: 125px; display: flex; }
.vehicle { flex: none; width: 267px; padding: 0 0 0 18px; display: flex; align-items: center; border-right: 2px solid #e2e2e2; color: #2c3140; }
.vehicle p { width: 104px; margin: 0 0 0 20px; color: #26282e; font-weight: 300; }
.vehicle small { font-size: 17px; }
.vehicle .bike { width: 40px; height: 26px; }
.vehicle .truck { width: 40px; height: 33px; margin-left: -4px; }
.lane { position: relative; flex: 1; min-width: 0; overflow: hidden; background: repeating-linear-gradient(90deg, #e6e6e6 0 1px, transparent 1px 125px) 32px 0; color: #8d8f94; font-weight: 300; }
.span { position: absolute; top: 18px; height: 30px; border: 1px dashed #dcdcdc; border-bottom: 0; }
.bar { position: absolute; top: 60px; height: 8px; background: #989ea8; }
.stop, .depot { position: absolute; display: flex; align-items: center; justify-content: center; border: 1px solid #999a9f; background: #f4f4f4; }
.stop { top: 43px; height: 39px; border-radius: 8px; }
.depot { top: 40px; height: 46px; border-radius: 9px; }
.depot svg { width: 32px; height: 31px; color: #92949a; }
.end { box-shadow: 0 1px 5px rgba(0, 0, 0, .2); }
.end svg { width: 22px; height: 21px; color: #92949a; }
.driver { position: absolute; top: 5px; display: flex; align-items: center; gap: 11px; color: #81b4e2; }
.driver span { width: 30px; height: 30px; border-radius: 2px; background: #979aa3; color: #dad8d6; }

/* Scroll strip and footer */
.scroll { height: 20px; padding: 0 8px; display: flex; align-items: center; background: #f0f0f0; }
.scroll svg { width: 5px; height: 9px; color: #505050; }
.track { flex: 1; padding-left: 267px; }
.track i { display: block; width: 37%; height: 17px; background: #c1c1c1; }
.foot { height: 45px; padding: 0 0 0 14px; display: flex; align-items: center; justify-content: space-between; background: #f0f0f0; }
.stats { margin: 0; display: flex; gap: 11px; font-size: 13px; font-weight: 300; line-height: 15px; text-align: center; white-space: nowrap; color: #16181c; }
.stats dd { margin: 0; }
.stats sup { line-height: 0; font-size: 9px; }
.cmds { display: flex; gap: 4px; }
.pill { height: 39px; padding: 0 19px; display: flex; align-items: center; border-radius: 20px; color: #fff; box-shadow: inset 0 0 0 1px rgba(0, 0, 0, .2); }
.pill.blue { background: #1c65b2; gap: 6px; }
.pill.orange { background: #f3690c; }
.pill.mint { background: #bedbc3; color: #e9efe9; }
.pill.amber { background: #ffb53d; }
.lock { width: 14px; height: 22px; margin: 0 12px 0 -2px; }
.up { width: 12px; height: 8px; fill: none; stroke: #fff; stroke-width: 2.5; }
.marked { position: relative; }
.marked::after { content: ""; position: absolute; inset: -7px -6px -8px -3px; z-index: 30; border: 4px solid #ff0a3c; border-radius: 4px; pointer-events: none; }

/* Dialog */
.backdrop { position: fixed; inset: 1px 0; z-index: 20; display: grid; place-items: center; background: rgba(33, 33, 33, .48); }
.dialog { width: 750px; height: 220px; border-radius: 4px; background: #fff; box-shadow: 0 11px 15px -7px rgba(0, 0, 0, .3), 0 12px 38px 3px rgba(0, 0, 0, .35); }
.dialog-head { height: 80px; padding: 0 27px 0 20px; display: flex; align-items: center; justify-content: space-between; border-radius: 4px 4px 0 0; background: #1c65b2; color: #eaf1f8; }
.dialog h2 { margin: 0; font-size: 25px; font-weight: 400; }
.dialog-head svg { width: 17px; height: 17px; stroke: #eaf1f8; stroke-width: 2.5; }
.dialog p { margin: 0; padding: 27px 25px 38px; color: #000; font-weight: 300; }
.dialog-cmds { display: flex; justify-content: space-between; padding: 0 127px 0 137px; font-size: 15px; font-weight: 700; }
.cancel { width: 201px; height: 42px; border-radius: 2px; color: #1c5fab; box-shadow: 0 1px 4px rgba(0, 0, 0, .3); }
.ok { width: 165px; height: 42px; border-radius: 4px; background: #1c65b2; color: #fff; box-shadow: 0 1px 5px rgba(0, 0, 0, .4); }
.ok-mark::after { inset: -7px -9px -8px -10px; }

/* Floating widgets */
.floaters { position: fixed; left: 38px; bottom: 1px; z-index: 25; display: grid; gap: 15px; color: #000; }
.chat { width: 75px; height: 75px; border-radius: 50% 8px 50% 50%; background: #fdc513; display: grid; place-items: center; box-shadow: 0 4px 8px rgba(0, 0, 0, .35); }
.chat svg { width: 30px; height: 22px; }
.lang { width: 165px; height: 52px; padding-left: 4px; background: #fdc513; display: flex; align-items: center; justify-content: center; gap: 10px; font-size: 17px; }
.lang i { width: 20px; height: 20px; border: 3px solid #000; border-radius: 50%; }
.arrow { position: fixed; inset: 0; width: 100%; height: 100%; z-index: 40; pointer-events: none; }
```
